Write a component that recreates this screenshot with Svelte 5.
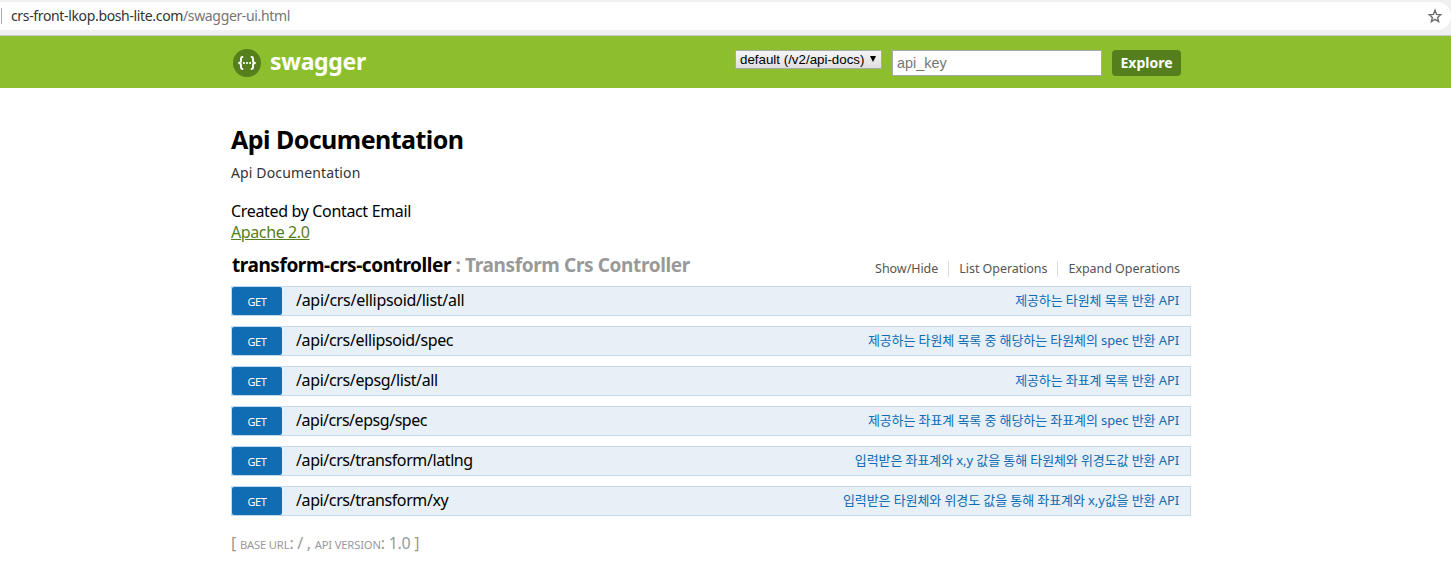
<script>
  const operations = [
    { path: '/api/crs/ellipsoid/list/all', summary: '제공하는 타원체 목록 반환 API', tracking: -0.29 },
    { path: '/api/crs/ellipsoid/spec', summary: '제공하는 타원체 목록 중 해당하는 타원체의 spec 반환 API', tracking: -0.36 },
    { path: '/api/crs/epsg/list/all', summary: '제공하는 좌표계 목록 반환 API', tracking: -0.37 },
    { path: '/api/crs/epsg/spec', summary: '제공하는 좌표계 목록 중 해당하는 좌표계의 spec 반환 API', tracking: -0.46 },
    { path: '/api/crs/transform/latlng', summary: '입력받은 좌표계와 x,y 값을 통해 타원체와 위경도값 반환 API', tracking: -0.4 },
    { path: '/api/crs/transform/xy', summary: '입력받은 타원체와 위경도 값을 통해 좌표계와 x,y값을 반환 API', tracking: -0.4 }
  ];
</script>

<div class="browser">
  <div class="address">
    <span class="tick"></span>
    <span class="url">crs-front-lkop.bosh-lite.com<i>/swagger-ui.html</i></span>
    <svg class="star" width="16" height="16" viewBox="0 0 16 16">
      <path d="M8 2.300 9.600 6.400 13.700 6.700 10.600 9.400 11.600 13.500 8 11.300 4.400 13.500 5.400 9.400 2.300 6.700 6.400 6.400z" fill="none" stroke="#6a6a6a" stroke-width="1.4" />
    </svg>
  </div>
</div>

<header>
  <div class="wrap bar">
    <a class="logo" href="#top">
      <svg width="28" height="28" viewBox="0 0 28 28">
        <circle cx="14" cy="14" r="14" fill="#547f1c" />
        <g fill="none" stroke="#fff" stroke-width="1.9">
          <path d="M10.200 8H9.400Q8 8 8 9.400v2.400Q8 14 5.300 14 8 14 8 16.200V18.600q0 1.400 1.400 1.400h.8" />
          <path d="M17.800 8h.8Q20 8 20 9.400v2.400Q20 14 22.700 14 20 14 20 16.200V18.600q0 1.400-1.400 1.400h-.8" />
        </g>
        <g fill="#fff"><circle cx="10.900" cy="14" r="1.100" /><circle cx="14" cy="14" r="1.100" /><circle cx="17.100" cy="14" r="1.100" /></g>
      </svg>
      <span>swagger</span>
    </a>
    <div class="form">
      <div class="select"><span>default (/v2/api-docs)</span>
        <svg width="6" height="7" viewBox="0 0 6 7"><path d="M0 0h6L3 6z" fill="#000" /></svg>
      </div>
      <input placeholder="api_key" />
      <button>Explore</button>
    </div>
  </div>
</header>

<main class="wrap">
  <h1>Api Documentation</h1>
  <p class="desc">Api Documentation</p>
  <p class="contact">Created by Contact Email</p>
  <p class="license"><a href="#license">Apache 2.0</a></p>

  <div class="heading">
    <h2><span>transform-crs-controller</span> <em>: Transform Crs Controller</em></h2>
    <ul>
      <li>Show/Hide</li>
      <li>List Operations</li>
      <li>Expand Operations</li>
    </ul>
  </div>

  <div class="operations">
    {#each operations as op}
      <div class="op">
        <span class="method">GET</span>
        <span class="path" style="letter-spacing: {op.tracking}px">{op.path}</span>
        <span class="summary">{op.summary}</span>
      </div>
    {/each}
  </div>

  <footer>[ <span>base url</span>: / , <span>api version</span>: 1.0 ]</footer>
</main>

<style>
  :global(body) { background: #fff; font-family: 'Noto Sans', 'Noto Sans CJK KR', sans-serif; color: #000; overflow: hidden; }
  h1, h2, p, ul { margin: 0; padding: 0; }
  .browser { height: 36px; box-sizing: border-box; padding-top: 2px; background: #f0f0f0; border-bottom: 1px solid #c9c9c9; }
  .address { display: flex; align-items: center; height: 28px; background: #fff; border-radius: 0 14px 14px 0; padding-right: 8px; }
  .tick { width: 1px; height: 16px; margin-left: 1px; background: #aaa; }
  .url { margin-left: 9px; font-size: 14px; line-height: 28px; letter-spacing: -0.35px; color: #333; white-space: nowrap; }
  .url i { font-style: normal; color: #757575; }
  .star { margin-left: auto; }
  header { height: 52px; background: #8cbe2d; }
  .wrap { width: 960px; margin-left: 231px; }
  .bar { display: flex; justify-content: space-between; }
  .logo { display: flex; margin: 13px 0 0 2px; gap: 9px; color: #fff; text-decoration: none; font-weight: 700; font-size: 23px; line-height: 24px; letter-spacing: -0.3px; }
  .form { display: flex; align-items: flex-start; gap: 10px; padding: 14px 10px 0 0; }
  .select { display: flex; align-items: center; justify-content: space-between; box-sizing: border-box; width: 147px; height: 19px; padding: 0 5px 0 4px; border: 1px solid #a9a9a9; background: linear-gradient(#f6f6f6, #dedede); font: 13.33px 'Liberation Sans', sans-serif; white-space: nowrap; }
  input { box-sizing: border-box; width: 210px; height: 26px; margin: 0; padding: 0 4px; border: 1px solid #a9a9a9; background: #fff; font: 14.4px 'Liberation Sans', sans-serif; outline: 0; }
  input::placeholder { color: #757575; }
  button { width: 69px; height: 26px; padding: 0; border: 0; border-radius: 4px; background: #547f1c; color: #fff; font: 700 14px/26px 'Noto Sans', sans-serif; }
  h1 { padding-top: 35px; font-size: 25px; line-height: 32px; letter-spacing: -0.54px; }
  .desc { margin-top: 7px; font-size: 14px; line-height: 21px; letter-spacing: 0.135px; color: #333; }
  .contact { margin-top: 18px; font-size: 16px; line-height: 21px; letter-spacing: -0.34px; }
  .license { font-size: 16px; line-height: 21px; letter-spacing: -0.39px; }
  .license a { color: #547f1c; }
  .heading { display: flex; justify-content: space-between; height: 43px; box-sizing: border-box; padding: 9px 11px 0 1px; white-space: nowrap; }
  h2 { font-size: 19px; line-height: 26px; letter-spacing: -0.43px; }
  h2 em { font-style: normal; color: #999; letter-spacing: -0.36px; }
  ul { display: flex; list-style: none; padding-top: 9px; }
  li { height: 16px; padding: 0 10px; border-left: 1px solid #ddd; font-size: 12.5px; line-height: 15px; letter-spacing: -0.05px; color: #555; }
  li:first-child { border: 0; }
  li:last-child { padding-right: 0; }
  .operations { display: flex; flex-direction: column; gap: 10px; }
  .op { display: flex; align-items: center; height: 28px; border: 1px solid #c3d9ec; background: #e7eff7; white-space: nowrap; }
  .method { width: 50px; height: 28px; border-radius: 2px; background: #106cb3; color: #fff; font-size: 11px; line-height: 30px; letter-spacing: -0.4px; text-align: center; }
  .path { margin-left: 14px; font-size: 16px; line-height: 26px; padding-bottom: 2px; }
  .summary { margin-left: auto; padding: 0 11px 2px 0; font-size: 13px; line-height: 26px; letter-spacing: -0.1px; color: #106cb3; }
  footer { padding-top: 16px; font-size: 16px; line-height: 22px; letter-spacing: -0.28px; color: #999; }
  footer span { font-size: 11.2px; letter-spacing: -0.15px; text-transform: uppercase; }
</style>
